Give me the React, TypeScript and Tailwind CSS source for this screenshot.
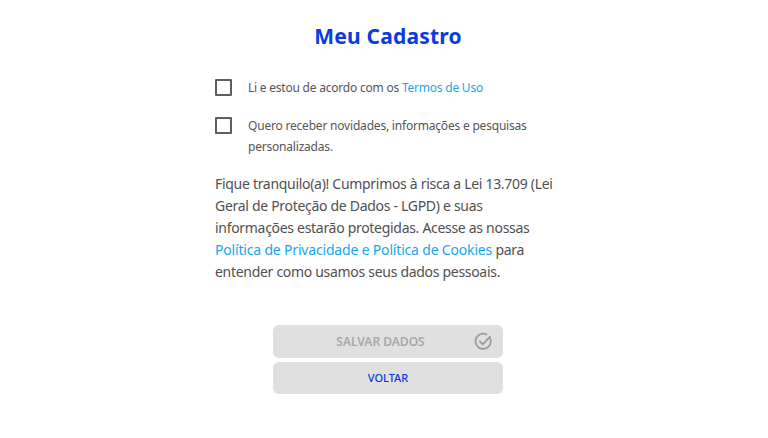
const font = { fontFamily: '"Noto Sans", sans-serif' };

const CheckIcon = () => (
  <svg className="absolute right-[10px] top-[7px] w-[19px] h-[19px]" viewBox="0 0 19 19" fill="none" stroke="#9a9a9a" strokeWidth="1.7" strokeLinecap="round" strokeLinejoin="round">
    <path d="M16.2 6.6A7.6 7.6 0 1 1 12.6 2.6" />
    <path d="M5.8 9.3l3 3 7.2-7.6" />
  </svg>
);

const App = () => {
  return (
    <div className="w-[768px] h-[438px] bg-white flex flex-col items-center pl-[8px] overflow-hidden" style={font}>
      <h1 className="mt-[21px] text-[21px] leading-[30px] font-bold text-[#0a3be0] tracking-[0.2px]">Meu Cadastro</h1>

      <div className="w-[346px] mt-[20px] flex flex-col">
        <div className="flex items-center h-[32px]">
          <div className="w-[17px] h-[17px] border-2 border-[#5f5f5f] rounded-[1px] shrink-0" />
          <p className="ml-[16px] text-[12px] leading-[21px] text-[#555555] tracking-[-0.22px]">
            Li e estou de acordo com os <span className="text-[#1aa5ec]">Termos de Uso</span>
          </p>
        </div>
        <div className="flex items-start mt-[12px]">
          <div className="w-[17px] h-[17px] mt-[2px] border-2 border-[#5f5f5f] rounded-[1px] shrink-0" />
          <p className="ml-[16px] w-[300px] text-[12px] leading-[21px] text-[#555555] tracking-[-0.2px]">
            Quero receber novidades, informações e pesquisas personalizadas.
          </p>
        </div>
        <p className="mt-[16px] text-[14px] leading-[22px] text-[#505050] tracking-[-0.3px]">
          Fique tranquilo(a)! Cumprimos à risca a Lei 13.709 (Lei Geral de Proteção de Dados - LGPD) e suas informações
          estarão protegidas. Acesse as nossas <span className="text-[#1aa5ec] tracking-[-0.18px]">Política de Privacidade e Política de Cookies</span>{' '}
          para entender como usamos seus dados pessoais.
        </p>
      </div>

      <div className="mt-[42px] w-[230px] flex flex-col gap-[4px]">
        <button className="relative h-[33px] pr-[15px] rounded-[6px] bg-[#e0e0e0] text-[12px] font-semibold text-[#a8a8a8]">
          SALVAR DADOS
          <CheckIcon />
        </button>
        <button className="h-[32px] rounded-[6px] bg-[#e0e0e0] text-[11px] font-medium text-[#0a3be0]">VOLTAR</button>
      </div>
    </div>
  );
};

export default App;
